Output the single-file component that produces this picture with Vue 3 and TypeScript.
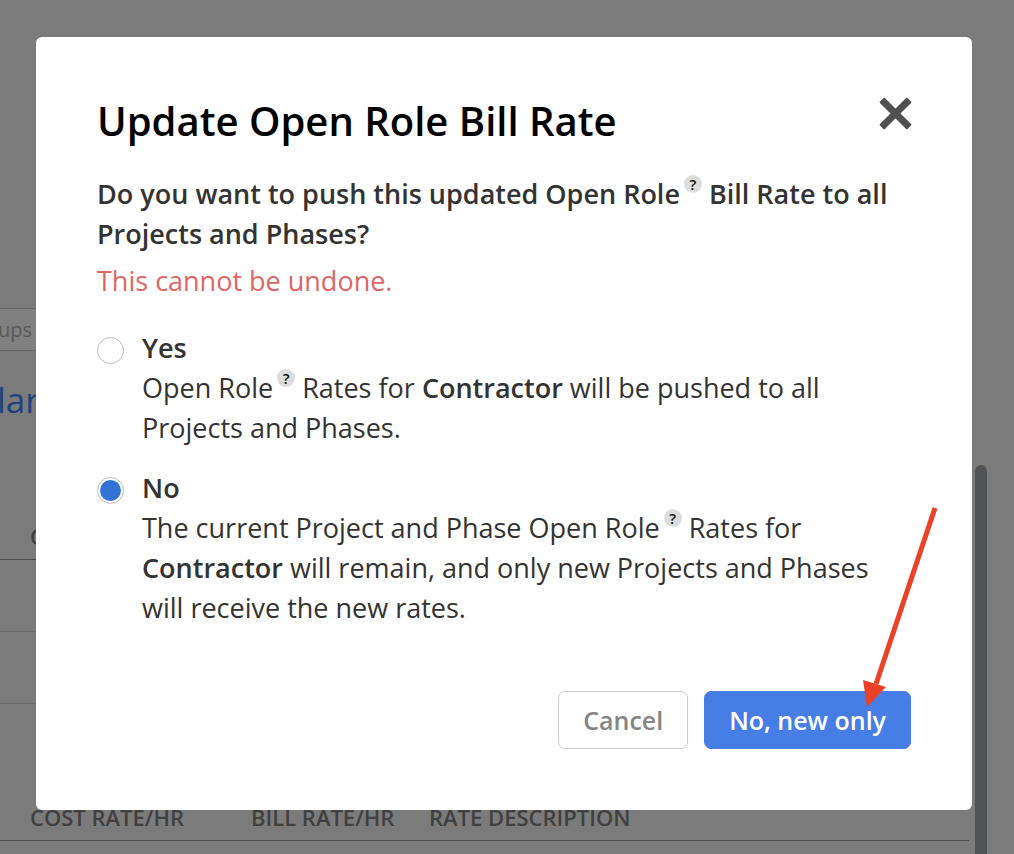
<script setup lang="ts">
import { computed, ref } from 'vue'

type Choice = 'yes' | 'no'

const choice = ref<Choice>('no')
const role = 'Contractor'
const confirmLabel = computed(() => (choice.value === 'no' ? 'No, new only' : 'Yes, push to all'))
const columns = ['Cost Rate/hr', 'Bill Rate/hr', 'Rate Description']
</script>

<template>
  <div class="screen">
    <div class="page">
      <div class="filter">ups</div>
      <a class="person" href="#">lar</a>
      <table class="rates">
        <thead>
          <tr><th v-for="c in columns" :key="c">{{ c }}</th></tr>
        </thead>
        <tbody>
          <tr><td colspan="3"></td></tr>
          <tr><td colspan="3"></td></tr>
        </tbody>
      </table>
      <table class="rates second">
        <thead>
          <tr><th v-for="c in columns" :key="c">{{ c }}</th></tr>
        </thead>
      </table>
    </div>
    <div class="scrollbar"></div>

    <div class="overlay">
      <section class="modal" role="dialog" aria-modal="true" aria-labelledby="modal-title">
        <header class="head">
          <h1 id="modal-title">Update Open Role Bill Rate</h1>
          <button class="close" type="button" aria-label="Close">
            <svg viewBox="0 0 32 32" width="32" height="32">
              <g fill="#505050">
                <rect x="-3" y="13" width="39" height="7" rx="1" transform="rotate(45 16.5 16.5)" />
                <rect x="-3" y="13" width="39" height="7" rx="1" transform="rotate(-45 16.5 16.5)" />
              </g>
            </svg>
          </button>
        </header>

        <p class="question">
          Do you want to push this updated Open Role<sup class="hint">?</sup> Bill Rate to all Projects and Phases?
        </p>
        <p class="warning">This cannot be undone.</p>

        <form class="options" @submit.prevent>
          <div class="option">
            <input id="push-yes" v-model="choice" type="radio" name="push" value="yes" />
            <label for="push-yes">
              <strong class="name">Yes</strong>
              <span>Open Role<sup class="hint">?</sup> Rates for <strong>{{ role }}</strong> will be pushed to all Projects and Phases.</span>
            </label>
          </div>
          <div class="option">
            <input id="push-no" v-model="choice" type="radio" name="push" value="no" />
            <label for="push-no">
              <strong class="name">No</strong>
              <span>The current Project and Phase Open Role<sup class="hint">?</sup> Rates for <strong>{{ role }}</strong> will remain, and only new Projects and Phases will receive the new rates.</span>
            </label>
          </div>
        </form>

        <footer class="actions">
          <button class="btn" type="button">Cancel</button>
          <button class="btn primary" type="button">
            {{ confirmLabel }}
            <svg class="arrow" viewBox="0 0 76 202" width="76" height="202" aria-hidden="true">
              <path d="M73 2 14 178" fill="none" stroke="#eb4127" stroke-width="5" />
              <path d="M1 174 24 181 5 201Z" fill="#eb4127" />
            </svg>
          </button>
        </footer>
      </section>
    </div>
  </div>
</template>

<style>
body {
  margin: 0;
  background: #7b7b7b;
}
</style>

<style scoped>
.screen {
  position: relative;
  min-height: 100vh;
  overflow: hidden;
  box-sizing: border-box;
  background: #7b7b7b;
  color: #333;
  font-family: 'Open Sans', 'Noto Sans', sans-serif;
  font-size: 27px;
  line-height: 40px;
}

.page {
  padding-top: 308px;
  padding-right: 45px;
}

.filter {
  height: 41px;
  border-top: 1px solid #666;
  border-bottom: 1px solid #666;
  background: #808080;
  color: #595959;
  font-size: 20px;
  line-height: 41px;
  text-indent: -2px;
}

.person {
  display: block;
  margin-top: 29px;
  color: #1f4280;
  font-size: 35px;
  text-decoration: none;
  text-indent: -3px;
}

.rates {
  width: 100%;
  margin-top: 95px;
  border-collapse: collapse;
  table-layout: fixed;
}

.rates th {
  height: 42px;
  padding: 0 0 2px 30px;
  border-bottom: 1px solid #4a4a4a;
  color: #404040;
  font-size: 22px;
  font-weight: 600;
  line-height: 42px;
  text-align: left;
  text-transform: uppercase;
  white-space: nowrap;
}

.rates th:nth-child(1) {
  width: 191px;
}

.rates th:nth-child(2) {
  width: 148px;
}

.rates td {
  height: 71px;
  padding: 0;
  border-bottom: 1px solid #6a6a6a;
}

.rates.second {
  margin-top: 92px;
}

.scrollbar {
  position: absolute;
  top: 465px;
  right: 27px;
  bottom: 0;
  width: 12px;
  border-radius: 6px 6px 0 0;
  background: #505156;
}

.overlay {
  position: absolute;
  inset: 0;
  padding: 37px 42px 44px 36px;
}

.modal {
  box-sizing: border-box;
  padding: 60px 61px 61px;
  border-radius: 6px;
  background: #fff;
}

.head {
  display: flex;
  align-items: flex-start;
  justify-content: space-between;
}

h1 {
  margin: 0;
  color: #000;
  font-size: 40px;
  font-weight: 600;
  line-height: 48px;
}

.close {
  display: flex;
  padding: 0;
  border: 0;
  background: none;
}

.close svg {
  overflow: visible;
}

.question,
.warning {
  margin: 0;
}

.question {
  margin-top: 29px;
  font-weight: 600;
}

.warning {
  margin-top: 7px;
  color: #de6664;
}

.hint {
  display: inline-block;
  width: 18px;
  height: 18px;
  margin: -10px 0 0 4px;
  border-radius: 50%;
  background: #ddd;
  color: #111;
  font-size: 15px;
  font-weight: 600;
  line-height: 18px;
  text-align: center;
  vertical-align: 14px;
}

.options {
  display: grid;
  gap: 20px;
  margin-top: 27px;
}

.option {
  display: flex;
  align-items: flex-start;
  gap: 18px;
}

.option input {
  flex: none;
  width: 27px;
  height: 27px;
  margin: 9px 0 0;
  border: 1px solid #bbb;
  border-radius: 50%;
  appearance: none;
  background: #fff;
}

.option input:checked {
  background: #3373d6;
  background-clip: content-box;
  padding: 2px;
}

.option label {
  flex: 1;
}

.name {
  display: block;
}

strong {
  font-weight: 600;
}

.actions {
  display: flex;
  justify-content: flex-end;
  gap: 16px;
  margin-top: 63px;
}

.btn {
  position: relative;
  height: 58px;
  padding: 0 24px;
  border: 1px solid #ccc;
  border-radius: 7px;
  background: #fff;
  color: #858585;
  font-family: inherit;
  font-size: 25px;
  font-weight: 600;
}

.primary {
  border-color: #477ee5;
  background: #477ee5;
  color: #fff;
}

.arrow {
  position: absolute;
  right: -28px;
  bottom: 40px;
  pointer-events: none;
}
</style>
